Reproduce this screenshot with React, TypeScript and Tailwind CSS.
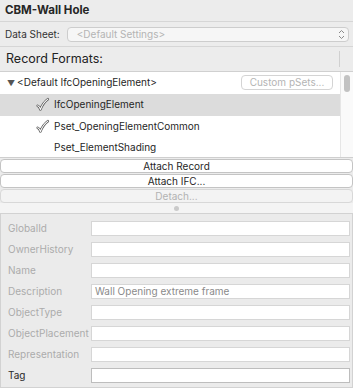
import React from "react";

const font = { fontFamily: "Inter, 'Noto Sans', 'Liberation Sans', sans-serif" };

function Check() {
  return (
    <svg width="15" height="15" viewBox="0 0 14 14" className="shrink-0">
      <path d="M2.5 8.2 C3.6 8.6 4.6 10 5 11.6 C6.6 7.6 9 4.2 12 2" fill="none" stroke="#555" strokeWidth="2.3" strokeLinecap="round" strokeLinejoin="round" />
      <path d="M2.5 8.2 C3.6 8.6 4.6 10 5 11.6 C6.6 7.6 9 4.2 12 2" fill="none" stroke="#fff" strokeWidth="1" strokeLinecap="round" strokeLinejoin="round" />
    </svg>
  );
}

function Chevrons() {
  return (
    <svg width="7" height="11" viewBox="0 0 7 11">
      <path d="M1 4 L3.5 1.5 L6 4" fill="none" stroke="#8a8a8a" strokeWidth="1" />
      <path d="M1 7 L3.5 9.5 L6 7" fill="none" stroke="#8a8a8a" strokeWidth="1" />
    </svg>
  );
}

const fields = [
  { label: "GlobalId", value: "" },
  { label: "OwnerHistory", value: "" },
  { label: "Name", value: "" },
  { label: "Description", value: "Wall Opening extreme frame" },
  { label: "ObjectType", value: "" },
  { label: "ObjectPlacement", value: "" },
  { label: "Representation", value: "" },
  { label: "Tag", value: "", active: true },
];

export default function App() {
  return (
    <div className="w-[353px] h-[388px] overflow-hidden bg-[#ececec] flex flex-col text-[#262626]" style={font}>
      <div className="h-[22px] px-[5px] flex items-center text-[11.5px] font-bold border-b border-[#d6d6d6]">
        CBM-Wall Hole
      </div>
      <div className="h-[25px] pl-[5px] pr-[4px] flex items-center gap-[7px] border-b border-[#d6d6d6]">
        <span className="text-[10px] text-[#333]">Data Sheet:</span>
        <div className="flex-1 h-[15px] rounded-[4px] border border-[#cdcdcd] bg-[#f6f6f6] flex items-center justify-between pl-[9px] pr-[3px]">
          <span className="text-[10px] text-[#b4b4b4]">&lt;Default Settings&gt;</span>
          <Chevrons />
        </div>
      </div>
      <div className="h-[25px] flex items-stretch border-b border-[#d0d0d0]">
        <div className="flex-1 pl-[6px] flex items-center text-[12.5px] text-[#222]">Record Formats:</div>
        <div className="w-[14px] my-[4px] border-l border-[#d0d0d0]" />
      </div>
      <div className="h-[86px] flex bg-white border-b border-[#cfcfcf]">
        <div className="flex-1 flex flex-col text-[10px]">
          <div className="h-[22px] flex items-center pl-[7px] pr-[7px]">
            <span className="text-[8px] text-[#555] mr-[2px]">▼</span>
            <span>&lt;Default IfcOpeningElement&gt;</span>
            <div className="ml-auto h-[15px] w-[92px] rounded-[4px] border border-[#d4d4d4] flex items-center justify-center text-[#b4b4b4]">
              Custom pSets...
            </div>
          </div>
          <div className="h-[22px] flex items-center pl-[35px] bg-[#dcdcdc]">
            <Check />
            <span className="ml-[4px]">IfcOpeningElement</span>
          </div>
          <div className="h-[22px] flex items-center pl-[35px]">
            <Check />
            <span className="ml-[4px]">Pset_OpeningElementCommon</span>
          </div>
          <div className="h-[20px] flex items-center pl-[54px]">
            <span>Pset_ElementShading</span>
          </div>
        </div>
        <div className="w-[13px] bg-[#fafafa] border-l border-[#e6e6e6] pt-[3px] flex justify-center">
          <div className="w-[6px] h-[17px] rounded-full bg-[#c2c2c2]" />
        </div>
      </div>
      <div className="flex flex-col gap-[1px] text-[10px] pt-[1px]">
        <div className="h-[14px] rounded-[4px] border border-[#c4c4c4] bg-white flex items-center justify-center">Attach Record</div>
        <div className="h-[14px] rounded-[4px] border border-[#c4c4c4] bg-white flex items-center justify-center">Attach IFC...</div>
        <div className="h-[14px] rounded-[4px] border border-[#d8d8d8] bg-[#f3f3f3] flex items-center justify-center text-[#b2b2b2]">Detach...</div>
      </div>
      <div className="h-[10px] bg-[#f4f4f4] flex items-center justify-center">
        <div className="w-[5px] h-[5px] rounded-full bg-[#cacaca]" />
      </div>
      <div className="flex-1 border border-[#d2d2d2] bg-[#ebebeb] pt-[7px] pl-[7px] pr-[2px] flex flex-col gap-[6px]">
        {fields.map((f) => (
          <div key={f.label} className="h-[15px] flex items-center">
            <span className={`w-[83px] text-[10px] ${f.active ? "text-[#2a2a2a]" : "text-[#ababab]"}`}>{f.label}</span>
            <div className={`flex-1 h-[15px] bg-white border ${f.active ? "border-[#bdbdbd]" : "border-[#d6d6d6]"} flex items-center px-[3px] text-[10px] text-[#8a8a8a]`}>
              {f.value}
            </div>
          </div>
        ))}
      </div>
    </div>
  );
}
